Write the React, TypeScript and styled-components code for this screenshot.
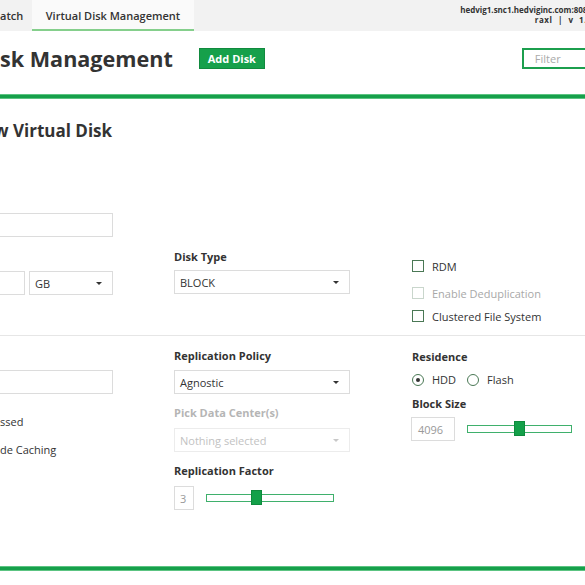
import React from "react";
import styled, { createGlobalStyle } from "styled-components";

const Global = createGlobalStyle`
  html, body { margin: 0; padding: 0; background: #fff; overflow: hidden; }
  body { font-family: "Open Sans", "Liberation Sans", sans-serif; color: #333; }
  * { box-sizing: border-box; }
`;

const Page = styled.div`
  width: 585px;
  height: 585px;
  overflow: hidden;
  display: flex;
  flex-direction: column;
`;

const TopBar = styled.div`
  height: 31px;
  background: #f2f2f2;
  display: flex;
  align-items: stretch;
  flex-shrink: 0;
`;

const Tab = styled.div<{ $active?: boolean; $w: number }>`
  width: ${(p) => p.$w}px;
  flex-shrink: 0;
  display: flex;
  align-items: center;
  justify-content: ${(p) => (p.$active ? "center" : "flex-start")};
  font-size: 11px;
  font-weight: 600;
  color: #333;
  background: ${(p) => (p.$active ? "#fafafa" : "transparent")};
  border-bottom: 2px solid ${(p) => (p.$active ? "#85cf8c" : "transparent")};
  padding-top: 2px;
  white-space: nowrap;
`;

const HostInfo = styled.div`
  margin-left: auto;
  margin-right: -7px;
  padding-top: 5px;
  text-align: right;
  font-size: 8px;
  font-weight: 700;
  line-height: 10px;
  color: #333;
  white-space: nowrap;
`;

const HostVersion = styled.div`
  word-spacing: 3px;
  letter-spacing: 0.5px;
`;

const HeaderRow = styled.div`
  height: 55px;
  margin-bottom: 8px;
  display: flex;
  align-items: center;
  flex-shrink: 0;
  white-space: nowrap;
  & > * { flex-shrink: 0; }
`;

const Title = styled.h1`
  margin: 0;
  font-size: 21.6px;
  font-weight: 700;
  color: #333;
  line-height: 30px;
`;

const AddButton = styled.button`
  margin-left: 26px;
  width: 66px;
  height: 21px;
  border: 1px solid #118a3e;
  background: #16a04b;
  color: #fff;
  font-family: inherit;
  font-size: 11px;
  font-weight: 700;
  padding: 0;
`;

const FilterInput = styled.div`
  margin-left: 257px;
  width: 110px;
  height: 21px;
  border: 2px solid #1c9f4e;
  display: flex;
  align-items: center;
  padding-left: 11px;
  font-size: 11px;
  color: #aaa;
`;

const GreenRule = styled.div<{ $mt?: number }>`
  height: 5px;
  background: #16a04b;
  border-top: 1px solid #5cc482;
  border-bottom: 1px solid #5cc482;
  margin-top: ${(p) => p.$mt ?? 0}px;
  flex-shrink: 0;
`;

const SubTitle = styled.h2`
  margin: 20px 0 0 -6px;
  font-size: 17px;
  font-weight: 700;
  line-height: 24px;
  color: #333;
  white-space: nowrap;
`;

const FormSection = styled.div<{ $pb: number }>`
  display: grid;
  grid-template-columns: 174px 238px 1fr;
  padding-bottom: ${(p) => p.$pb}px;
  align-items: start;
  flex-shrink: 0;
`;

const Divider = styled.div`
  height: 1px;
  background: #e6e6e6;
  flex-shrink: 0;
`;

const Col = styled.div<{ $pt: number }>`
  display: flex;
  flex-direction: column;
  padding-top: ${(p) => p.$pt}px;
`;

const Label = styled.div<{ $mt?: number; $disabled?: boolean }>`
  margin-top: ${(p) => p.$mt ?? 0}px;
  font-size: 11px;
  font-weight: 700;
  line-height: 16px;
  color: ${(p) => (p.$disabled ? "#b5b5b5" : "#333")};
  white-space: nowrap;
`;

const TextInput = styled.div<{ $w: number; $mt?: number; $ml?: number }>`
  margin-top: ${(p) => p.$mt ?? 0}px;
  margin-left: ${(p) => p.$ml ?? 0}px;
  width: ${(p) => p.$w}px;
  height: 24px;
  border: 1px solid #dcdcdc;
  background: #fff;
  display: flex;
  align-items: center;
  padding-left: 6px;
  font-size: 11px;
  color: #999;
  flex-shrink: 0;
`;

const Row = styled.div<{ $mt?: number; $gap?: number }>`
  display: flex;
  align-items: center;
  margin-top: ${(p) => p.$mt ?? 0}px;
  gap: ${(p) => p.$gap ?? 0}px;
`;

const SelectBox = styled.div<{ $w: number; $mt?: number; $disabled?: boolean }>`
  margin-top: ${(p) => p.$mt ?? 0}px;
  width: ${(p) => p.$w}px;
  height: 24px;
  border: 1px solid ${(p) => (p.$disabled ? "#ececec" : "#dcdcdc")};
  background: #fff;
  display: flex;
  align-items: center;
  justify-content: space-between;
  padding: 0 10px 0 5px;
  font-size: 11px;
  color: ${(p) => (p.$disabled ? "#c2c2c2" : "#333")};
  white-space: nowrap;
`;

const Caret = styled.span<{ $disabled?: boolean }>`
  width: 0;
  height: 0;
  border-left: 3px solid transparent;
  border-right: 3px solid transparent;
  border-top: 3px solid ${(p) => (p.$disabled ? "#c8c8c8" : "#333")};
`;

const PlainText = styled.div<{ $mt?: number }>`
  margin-top: ${(p) => p.$mt ?? 0}px;
  font-size: 11px;
  line-height: 16px;
  color: #333;
  white-space: nowrap;
`;

const CheckRow = styled.label<{ $mt?: number; $disabled?: boolean }>`
  display: flex;
  align-items: center;
  gap: 8px;
  margin-top: ${(p) => p.$mt ?? 0}px;
  height: 16px;
  font-size: 11px;
  color: ${(p) => (p.$disabled ? "#a8a8a8" : "#333")};
  white-space: nowrap;
`;

const Box = styled.span<{ $disabled?: boolean }>`
  width: 12px;
  height: 12px;
  border: 1.5px solid ${(p) => (p.$disabled ? "#c9d6cc" : "#4a7855")};
  background: #fff;
  flex-shrink: 0;
`;

const RadioCircle = styled.span<{ $checked?: boolean }>`
  width: 12px;
  height: 12px;
  border-radius: 50%;
  border: 1.5px solid #4a7855;
  display: flex;
  align-items: center;
  justify-content: center;
  flex-shrink: 0;
  &::after {
    content: "";
    width: 4px;
    height: 4px;
    border-radius: 50%;
    background: ${(p) => (p.$checked ? "#333" : "transparent")};
  }
`;

const RadioItem = styled.label`
  display: flex;
  align-items: center;
  gap: 8px;
  font-size: 11px;
  color: #333;
`;

const Track = styled.div<{ $w: number; $ml: number }>`
  position: relative;
  margin-left: ${(p) => p.$ml}px;
  width: ${(p) => p.$w}px;
  height: 8px;
  border: 1px solid #3fb06c;
  background: #fff;
`;

const Thumb = styled.div`
  position: absolute;
  top: -5px;
  width: 11px;
  height: 15px;
  background: #13a049;
  border: 1px solid #0f8a3d;
`;

const Slider: React.FC<{ w: number; ml: number; pos: number }> = ({ w, ml, pos }) => (
  <Track $w={w} $ml={ml}>
    <Thumb style={{ left: pos }} />
  </Track>
);

export default function App() {
  return (
    <>
      <Global />
      <Page>
        <TopBar>
          <Tab $w={32}>atch</Tab>
          <Tab $w={162} $active>
            Virtual Disk Management
          </Tab>
          <HostInfo>
            <div>hedvig1.snc1.hedviginc.com:8080</div>
            <HostVersion>raxl | v 1.0</HostVersion>
          </HostInfo>
        </TopBar>

        <HeaderRow>
          <Title>sk Management</Title>
          <AddButton>Add Disk</AddButton>
          <FilterInput>Filter</FilterInput>
        </HeaderRow>

        <GreenRule />

        <SubTitle>w Virtual Disk</SubTitle>

        <FormSection $pb={11}>
          <Col $pt={70}>
            <TextInput $w={123} $ml={-10} />
            <Row $mt={34} $gap={4}>
              <TextInput $w={35} $ml={-10} />
              <SelectBox $w={84}>
                GB
                <Caret />
              </SelectBox>
            </Row>
          </Col>
          <Col $pt={106}>
            <Label>Disk Type</Label>
            <SelectBox $w={176} $mt={5}>
              BLOCK
              <Caret />
            </SelectBox>
          </Col>
          <Col $pt={115}>
            <CheckRow>
              <Box />
              RDM
            </CheckRow>
            <CheckRow $mt={11} $disabled>
              <Box $disabled />
              Enable Deduplication
            </CheckRow>
            <CheckRow $mt={7}>
              <Box />
              Clustered File System
            </CheckRow>
          </Col>
        </FormSection>

        <Divider />

        <FormSection $pb={0}>
          <Col $pt={34}>
            <TextInput $w={123} $ml={-10} />
            <PlainText $mt={20}>ssed</PlainText>
            <PlainText $mt={12}>de Caching</PlainText>
          </Col>
          <Col $pt={12}>
            <Label>Replication Policy</Label>
            <SelectBox $w={176} $mt={6}>
              Agnostic
              <Caret />
            </SelectBox>
            <Label $mt={11} $disabled>
              Pick Data Center(s)
            </Label>
            <SelectBox $w={176} $mt={7} $disabled>
              Nothing selected
              <Caret $disabled />
            </SelectBox>
            <Label $mt={11}>Replication Factor</Label>
            <Row $mt={7}>
              <TextInput $w={20} style={{ paddingLeft: 5 }}>3</TextInput>
              <Slider w={128} ml={12} pos={44} />
            </Row>
          </Col>
          <Col $pt={13}>
            <Label>Residence</Label>
            <Row $mt={7} $gap={11}>
              <RadioItem>
                <RadioCircle $checked />
                HDD
              </RadioItem>
              <RadioItem>
                <RadioCircle />
                Flash
              </RadioItem>
            </Row>
            <Label $mt={9}>Block Size</Label>
            <Row $mt={5}>
              <TextInput $w={44} style={{ marginLeft: -1 }}>
                4096
              </TextInput>
              <Slider w={105} ml={12} pos={46} />
            </Row>
          </Col>
        </FormSection>

        <GreenRule $mt={56} />
      </Page>
    </>
  );
}
